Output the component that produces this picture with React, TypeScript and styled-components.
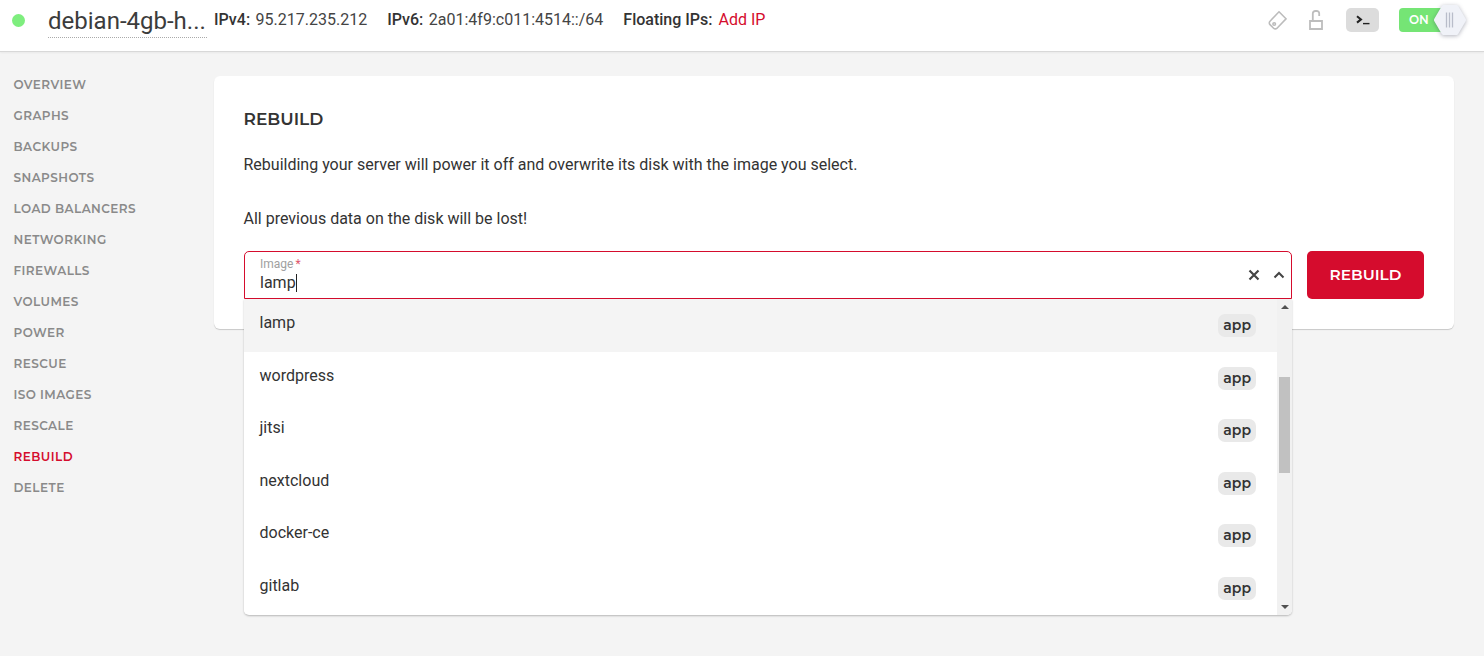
import React from 'react';
import styled, {createGlobalStyle} from 'styled-components';

const navItems = ['Overview', 'Graphs', 'Backups', 'Snapshots', 'Load Balancers', 'Networking', 'Firewalls', 'Volumes', 'Power', 'Rescue', 'ISO Images', 'Rescale', 'Rebuild', 'Delete'];
const images = ['lamp', 'wordpress', 'jitsi', 'nextcloud', 'docker-ce', 'gitlab'];

const RED = '#d50c2d';
const HEAD_FONT = `"Montserrat", Inter, "Liberation Sans", sans-serif`;

const GlobalStyle = createGlobalStyle`
    html, body {
        margin: 0;
        height: 100%;
        background: #f4f4f4;
        overflow: hidden;
    }
    body {
        font-family: Roboto, "Liberation Sans", sans-serif;
        color: #333;
    }
`

export default function App() {
    return (
        <>
            <GlobalStyle/>
            <Header>
                <StatusDot/>
                <ServerName>debian-4gb-h...</ServerName>
                <IpGroup>
                    <IpItem><b>IPv4:</b>95.217.235.212</IpItem>
                    <IpItem><b>IPv6:</b>2a01:4f9:c011:4514::/64</IpItem>
                    <IpItem><b>Floating IPs:</b><AddLink>Add IP</AddLink></IpItem>
                </IpGroup>
                <Actions>
                    <TagIcon viewBox="0 0 20 20">
                        <path d="M12 1.8 19 8.8 10 18.2a2.4 2.4 0 0 1-3.4 0L3 14.6a2.4 2.4 0 0 1 0-3.4z"/>
                        <circle cx="7.2" cy="14" r="1.3"/>
                    </TagIcon>
                    <LockIcon viewBox="0 0 14 20">
                        <path d="M1 11h12v8H1z"/>
                        <path d="M3.8 11V3.5a2.5 2.5 0 0 1 2.5-2.5h1.4a2.5 2.5 0 0 1 2.5 2.5V6"/>
                    </LockIcon>
                    <ConsoleButton>
                        <svg width="14" height="10" viewBox="0 0 14 10">
                            <path d="M1 1.2 5 4.4 1 7.6" fill="none" stroke="#222" strokeWidth="2"/>
                            <path d="M7 8.6h6.5" stroke="#222" strokeWidth="1.4"/>
                        </svg>
                    </ConsoleButton>
                    <PowerToggle>
                        <span>ON</span>
                        <Knob viewBox="0 0 34 32">
                            <path d="M10.5 1h13a2 2 0 0 1 1.7 1l7.6 13a2 2 0 0 1 0 2l-7.6 13a2 2 0 0 1-1.7 1h-13a2 2 0 0 1-1.7-1L1.2 17a2 2 0 0 1 0-2L8.800 2a2 2 0 0 1 1.700-1z" fill="#f0f2f8"/>
                            <path d="M13.5 8.5v15M16.5 8.5v15M19.5 8.5v15" stroke="#b9bdca" strokeWidth="1.3"/>
                        </Knob>
                    </PowerToggle>
                </Actions>
            </Header>
            <Body>
                <Sidebar>
                    {navItems.map(item => (
                        <NavItem key={item} $active={item === 'Rebuild'}>{item}</NavItem>
                    ))}
                </Sidebar>
                <Main>
                    <Card>
                        <Title>Rebuild</Title>
                        <Paragraph>Rebuilding your server will power it off and overwrite its disk with the image you select.</Paragraph>
                        <Paragraph>All previous data on the disk will be lost!</Paragraph>
                        <FormRow>
                            <SelectWrap>
                                <SelectBox>
                                    <FieldText>
                                        <FieldLabel>Image<em>*</em></FieldLabel>
                                        <FieldValue>lamp<Caret/></FieldValue>
                                    </FieldText>
                                    <svg width="12" height="12" viewBox="0 0 12 12">
                                        <path d="M1.5 1.5l9 9M10.5 1.5l-9 9" stroke="#444" strokeWidth="2.2"/>
                                    </svg>
                                    <svg width="12" height="8" viewBox="0 0 12 8">
                                        <path d="M1.5 6.5 6 2l4.5 4.5" fill="none" stroke="#444" strokeWidth="2"/>
                                    </svg>
                                </SelectBox>
                                <Dropdown>
                                    <OptionList>
                                        {images.map((name, i) => (
                                            <Option key={name} $hover={i === 0}>
                                                {name}
                                                <AppBadge>app</AppBadge>
                                            </Option>
                                        ))}
                                    </OptionList>
                                    <ScrollTrack>
                                        <ScrollThumb/>
                                        <ArrowUp/>
                                        <ArrowDown/>
                                    </ScrollTrack>
                                </Dropdown>
                            </SelectWrap>
                            <RebuildButton>Rebuild</RebuildButton>
                        </FormRow>
                    </Card>
                </Main>
            </Body>
        </>
    );
}

const Header = styled.header`
    height: 51px;
    background: #fff;
    border-bottom: 1px solid #d8d8d8;
    box-shadow: 0 1px 2px rgba(0, 0, 0, 0.05);
    display: flex;
    align-items: flex-start;
    padding-left: 12px;
    padding-right: 21px;
`

const StatusDot = styled.span`
    width: 13px;
    height: 13px;
    margin-top: 14px;
    border-radius: 50%;
    background: #7eee7e;
`

const ServerName = styled.div`
    width: 159px;
    height: 38px;
    margin-left: 23px;
    border-bottom: 1px dotted #aaa;
    box-sizing: border-box;
    font-size: 24px;
    line-height: 42px;
    color: #3c3c3c;
    white-space: nowrap;
`

const IpGroup = styled.div`
    margin-left: 7px;
    display: flex;
    gap: 20px;
    font-size: 16px;
    line-height: 40px;
    color: #444;
`

const IpItem = styled.span`
    display: flex;
    gap: 5.5px;

    b {
        font-weight: 500;
        color: #333;
    }
`

const AddLink = styled.span`
    margin-left: 0.5px;
    color: ${RED};
`

const Actions = styled.div`
    margin-left: auto;
    display: flex;
    align-items: center;
    height: 40px;
`

const TagIcon = styled.svg`
    width: 20px;
    height: 20px;
    fill: none;
    stroke: #bcbcbc;
    stroke-width: 1.6;
`

const LockIcon = styled.svg`
    width: 14px;
    height: 20px;
    margin-left: 22px;
    fill: none;
    stroke: #bdbdbd;
    stroke-width: 1.8;
`

const ConsoleButton = styled.div`
    width: 33px;
    height: 24px;
    margin-left: 23px;
    border-radius: 5px;
    background: #dcdcdc;
    display: flex;
    align-items: center;
    justify-content: center;
`

const PowerToggle = styled.div`
    position: relative;
    width: 52px;
    height: 24px;
    margin-left: 20px;
    margin-right: 12px;
    border-radius: 4px;
    background: #75e575;
    color: #fff;
    font-family: ${HEAD_FONT};
    font-weight: 600;
    font-size: 12px;
    line-height: 24px;
    padding-left: 10px;
    box-sizing: border-box;
`

const Knob = styled.svg`
    position: absolute;
    left: 34px;
    top: -4px;
    width: 34px;
    height: 32px;
    filter: drop-shadow(0 1px 2px rgba(60, 64, 90, 0.4));
`

const Body = styled.div`
    display: flex;
    align-items: flex-start;
`

const Sidebar = styled.nav`
    width: 214px;
    padding: 17px 0 0 13.5px;
    box-sizing: border-box;
    display: flex;
    flex-direction: column;
`

const NavItem = styled.a<{$active?: boolean}>`
    height: 31px;
    font-family: ${HEAD_FONT};
    font-size: 12px;
    font-weight: 600;
    letter-spacing: 0.45px;
    line-height: 31px;
    text-transform: uppercase;
    color: ${p => (p.$active ? RED : '#8a8a8a')};
`

const Main = styled.main`
    flex: 1;
    padding: 24px 30px 0 0;
`

const Card = styled.section`
    height: 253px;
    box-sizing: border-box;
    padding: 33px 30px 0;
    background: #fff;
    border-radius: 6px;
    box-shadow: 0 1px 1px rgba(0, 0, 0, 0.18);
`

const Title = styled.h2`
    margin: 0 0 24px -0.5px;
    font-family: ${HEAD_FONT};
    font-size: 17px;
    font-weight: 600;
    line-height: 21px;
    text-transform: uppercase;
    color: #333;
`

const Paragraph = styled.p`
    margin: 0 0 32px -0.5px;
    font-size: 16px;
    line-height: 22px;
    color: #333;
`

const FormRow = styled.div`
    display: flex;
    gap: 15px;
    margin-top: -11px;
`

const SelectWrap = styled.div`
    position: relative;
    flex: 1;
`

const SelectBox = styled.div`
    height: 48px;
    box-sizing: border-box;
    border: 1px solid ${RED};
    border-radius: 5px 5px 0 0;
    background: #fff;
    display: flex;
    align-items: center;
    gap: 13px;
    padding: 0 6px 0 15px;
`

const FieldText = styled.div`
    flex: 1;
    padding-bottom: 1px;
`

const FieldLabel = styled.div`
    font-size: 12px;
    line-height: 14px;
    color: #a0a0a0;

    em {
        color: #e0566c;
        font-style: normal;
        margin-left: 2px;
    }
`

const FieldValue = styled.div`
    display: flex;
    align-items: center;
    font-size: 16px;
    line-height: 20px;
    margin-top: 2px;
    color: #333;
`

const Caret = styled.span`
    width: 1px;
    height: 18px;
    background: #222;
`

const Dropdown = styled.div`
    position: absolute;
    left: 0;
    right: 0;
    top: 48px;
    height: 316px;
    display: flex;
    background: #fff;
    border-radius: 0 0 5px 5px;
    box-shadow: 0 1px 2px rgba(0, 0, 0, 0.25);
    overflow: hidden;
`

const OptionList = styled.div`
    flex: 1;
`

const Option = styled.div<{$hover?: boolean}>`
    height: 52.5px;
    display: flex;
    align-items: center;
    justify-content: space-between;
    box-sizing: border-box;
    padding: 0 21px 5px 15.5px;
    font-size: 16px;
    color: #333;
    background: ${p => (p.$hover ? '#f4f4f4' : '#fff')};
`

const AppBadge = styled.span`
    height: 23px;
    margin-top: 6px;
    padding: 0 5px;
    border-radius: 7px;
    background: #e9e9e9;
    font-family: ${HEAD_FONT};
    font-size: 14px;
    font-weight: 600;
    line-height: 23px;
    color: #333;
`

const ScrollTrack = styled.div`
    position: relative;
    width: 15px;
    background: #f1f1f1;
`

const ScrollThumb = styled.div`
    position: absolute;
    left: 2px;
    right: 2px;
    top: 78px;
    height: 96px;
    background: #c1c1c1;
`

const ArrowUp = styled.div`
    position: absolute;
    left: 4px;
    top: 6px;
    border: 4px solid transparent;
    border-top: 0;
    border-bottom: 4px solid #505050;
`

const ArrowDown = styled.div`
    position: absolute;
    left: 4px;
    bottom: 6px;
    border: 4px solid transparent;
    border-bottom: 0;
    border-top: 4px solid #505050;
`

const RebuildButton = styled.button`
    width: 117px;
    height: 48px;
    padding: 0 0 2px;
    border: none;
    border-radius: 5px;
    background: ${RED};
    color: #fff;
    font-family: ${HEAD_FONT};
    font-size: 15.3px;
    font-weight: 600;
    text-transform: uppercase;
`
